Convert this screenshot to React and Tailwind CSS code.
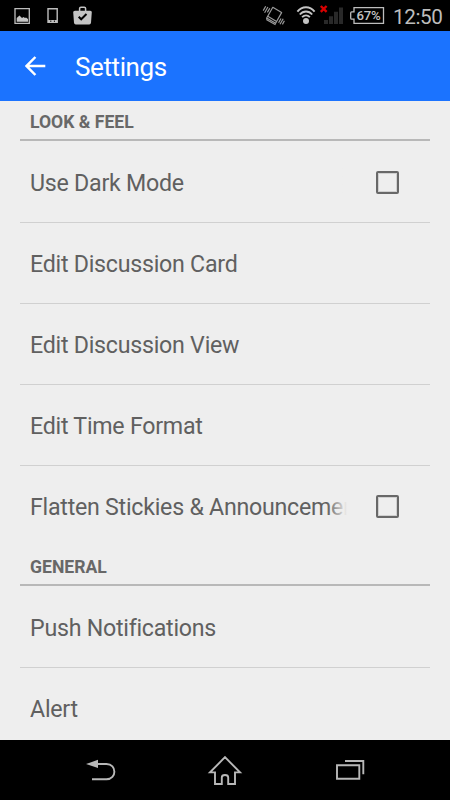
import { useState } from "react";

const sections = [
  {
    title: "LOOK & FEEL",
    items: [
      { label: "Use Dark Mode", checkable: true },
      { label: "Edit Discussion Card" },
      { label: "Edit Discussion View" },
      { label: "Edit Time Format" },
      { label: "Flatten Stickies & Announcements", checkable: true },
    ],
  },
  {
    title: "GENERAL",
    items: [{ label: "Push Notifications" }, { label: "Alert" }],
  },
];

function StatusBar() {
  return (
    <div className="flex h-[31px] shrink-0 items-center justify-between bg-black pl-[14px] pr-2">
      <svg width="79" height="31" viewBox="14 0 79 31" fill="none">
        {/* picture */}
        <path d="M15 8.7H29.3V23.3H15Z" stroke="#bdbdbd" strokeWidth="1.3" />
        <path d="M16.7 21.7V18L19.5 15.5L22 18L23.5 17L25 18L26 17.5L28 19V21.7Z" fill="#c4c4c4" />
        {/* phone */}
        <path d="M48 8.7H57.2V22.3H48Z" stroke="#bdbdbd" strokeWidth="1.4" />
        <path d="M48 21.2H57.2" stroke="#bdbdbd" strokeWidth="2.4" />
        <path d="M50.8 20.5V22M54.4 20.5V22" stroke="#000" strokeWidth="0.9" />
        {/* briefcase */}
        <path d="M79.6 11V8.5Q79.6 7.2 81 7.2H84.2Q85.6 7.2 85.6 8.5V11" stroke="#c4c4c4" strokeWidth="1.5" />
        <path d="M75 10.7H90.2Q92 10.7 91.8 12.3L91 22.8Q90.8 24.4 89.2 24.4H75.8Q74.2 24.4 74 22.8L73.2 12.3Q73.1 10.7 75 10.7Z" fill="#c4c4c4" />
        <path d="M78.7 16.7L81.2 19.3L86.5 14" stroke="#000" strokeWidth="2" />
      </svg>
      <div className="flex items-center">
        <svg width="82" height="31" viewBox="262 0 82 31" fill="none">
          {/* vibrate */}
          <g stroke="#999" strokeWidth="1.2">
            <path d="M266.7 18L272.8 7.3L281.6 12.6L275.6 23.2Z" strokeLinejoin="round" />
            <path d="M266.7 18L266.9 19.8L275 24.5L275.6 23.2M267.8 16.2L276.6 21.5" />
            <path d="M265.7 6.2L263.2 10.6M267.9 7L264.6 12.7M269.8 8.2L267.4 12.4M281 18.5L278.6 22.7M283.2 18.8L280 24.3M284.4 20.8L282.4 24.4" />
          </g>
          {/* wifi */}
          <g stroke="#c4c4c4" strokeWidth="1.9">
            <path d="M297.4 11.6C302 5.8 310 5.8 314.6 11.6" />
            <path d="M299.8 14.5C303.2 10.5 308.8 10.5 312.2 14.5" />
            <path d="M302.1 17.2C304.5 14.8 307.5 14.8 309.9 17.2" />
          </g>
          <circle cx="306" cy="21.1" r="3" fill="#c4c4c4" />
          {/* no signal */}
          <path d="M320.8 6L326.6 11.8M326.6 6L320.8 11.8" stroke="#d80000" strokeWidth="2.4" />
          <path d="M324 20H328V24H324ZM329 16.2H333V24H329ZM334 11.8H338V24H334ZM339 7.5H343V24H339Z" fill="#292929" />
        </svg>
        <div className="relative ml-1.5 h-[31px] w-[35px]">
          <svg className="absolute inset-0" width="35" height="31" viewBox="350 0 35 31" fill="none">
            <path d="M354 7.7H383.5V23.3H354V19.2H351.7Q350.7 19.2 350.7 18V13Q350.7 11.8 351.7 11.8H354Z" stroke="#bdbdbd" strokeWidth="1.3" />
          </svg>
          <span className="absolute left-[6.5px] top-[7px] text-[13.2px] font-medium leading-[17px] tracking-[-0.3px] text-[#c4c4c4]">67%</span>
        </div>
        <span className="ml-2 w-[49px] whitespace-nowrap pt-0.5 text-[20.7px] leading-[26px] tracking-[-0.4px] text-[#bdbdbd]">12:50</span>
      </div>
    </div>
  );
}

function AppBar() {
  return (
    <header className="flex h-[70px] shrink-0 items-center bg-[#1b73ff] pl-[25px] text-white">
      <button aria-label="Back">
        <svg width="21" height="20" viewBox="0 0 21 20" fill="none" stroke="currentColor" strokeWidth="2.5">
          <path d="M10.4 1L1.6 10L10.4 19M1.6 10H20.3" />
        </svg>
      </button>
      <h1 className="ml-[29px] pt-px text-[26px] leading-8 tracking-[-0.4px]">Settings</h1>
    </header>
  );
}

function Row({ label, checkable }) {
  const [checked, setChecked] = useState(false);

  return (
    <li className="flex h-[81px] items-center border-b border-[#d0d0d0] px-2.5 last:h-20 last:border-b-0">
      <span className="relative w-[317px] overflow-hidden whitespace-nowrap pt-0.5 text-[23.2px] leading-8 tracking-[-0.25px] text-[#606060]">
        {label}
        {checkable && <span className="absolute inset-y-0 right-0 w-5 bg-linear-to-r from-transparent to-[#eeeeee]" />}
      </span>
      {checkable && (
        <button
          role="checkbox"
          aria-checked={checked}
          aria-label={label}
          onClick={() => setChecked(!checked)}
          className={`ml-[29px] size-[23px] rounded-[2px] border-2 border-[#686868] shadow-[inset_0_0_0_1px_#d0d0d0] ${checked ? "bg-[#686868]" : ""}`}
        />
      )}
    </li>
  );
}

function NavBar() {
  return (
    <nav className="flex h-[60px] shrink-0 items-center bg-black text-[#b8b8b8]">
      <svg width="450" height="60" viewBox="0 0 450 60" fill="none" stroke="currentColor" strokeWidth="1.9">
        {/* back */}
        <path d="M97 24H106.5C117 24 117 39.3 106.5 39.3H92" />
        <path d="M86 24.1L98 19.8V28Z" fill="currentColor" stroke="none" />
        {/* home */}
        <path d="M225 17.2L240 32.4H235V44H228.2V37.5Q228.2 35 225 35Q221.8 35 221.8 37.5V44H215V32.4H210Z" />
        {/* recent apps */}
        <path d="M337 25.3H359.3V38.7H337ZM345 21H363.3V34.2" />
      </svg>
    </nav>
  );
}

export default function App() {
  return (
    <div className="flex h-[800px] w-[450px] flex-col overflow-hidden bg-[#eeeeee] font-['Roboto',sans-serif]">
      <StatusBar />
      <AppBar />
      <main className="min-h-0 flex-1 overflow-hidden px-5">
        {sections.map((section) => (
          <section key={section.title}>
            <div className="h-[41px]">
              <h2 className="h-10 pl-2.5 pt-2.5 text-[17.6px] font-bold leading-[22px] text-[#686868] shadow-[inset_0_-2px_0_#b8b8b8]">
                {section.title}
              </h2>
            </div>
            <ul>
              {section.items.map((item) => (
                <Row key={item.label} {...item} />
              ))}
            </ul>
          </section>
        ))}
      </main>
      <NavBar />
    </div>
  );
}
